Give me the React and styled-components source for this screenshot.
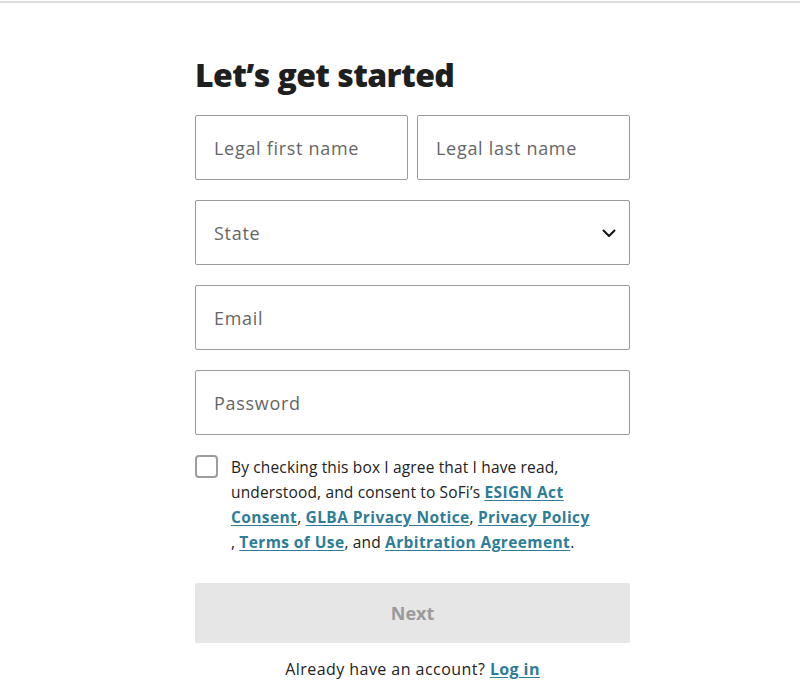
import React from 'react';
import styled, { createGlobalStyle } from 'styled-components';

const GlobalStyle = createGlobalStyle`
  body {
    margin: 0;
    background: #fff;
    font-family: 'Open Sans', 'Lato', sans-serif;
    color: #222;
  }
`;

function Chevron() {
  return (
    <svg width="16" height="16" viewBox="0 0 16 16" fill="none">
      <path d="M2.5 5.5L8 11l5.5-5.5" stroke="#111" strokeWidth="2" strokeLinecap="round" strokeLinejoin="round" />
    </svg>
  );
}

function App() {
  return (
    <Page>
      <GlobalStyle />
      <TopRule />
      <Form>
        <Title>Let’s get started</Title>
        <Row>
          <Field>Legal first name</Field>
          <Field>Legal last name</Field>
        </Row>
        <Field select>
          State
          <Chevron />
        </Field>
        <Field>Email</Field>
        <Field>Password</Field>
        <Consent>
          <Box />
          <ConsentText>
            By checking this box I agree that I have read,
            <br />
            understood, and consent to SoFi’s{' '}
            <TextLink href="#">
              ESIGN Act
              <br />
              Consent
            </TextLink>
            , <TextLink href="#">GLBA Privacy Notice</TextLink>, <TextLink href="#">Privacy Policy</TextLink>
            <br />, <TextLink href="#">Terms of Use</TextLink>, and <TextLink href="#">Arbitration Agreement</TextLink>.
          </ConsentText>
        </Consent>
        <NextButton disabled>Next</NextButton>
        <LoginLine>
          Already have an account? <TextLink href="#">Log in</TextLink>
        </LoginLine>
      </Form>
    </Page>
  );
}

export default App;

const Page = styled.div`
  min-height: 684px;
`;

const TopRule = styled.div`
  height: 2px;
  margin-top: 1px;
  background: #dedede;
`;

const Form = styled.div`
  width: 435px;
  margin-left: 195px;
  padding-top: 52px;
  display: flex;
  flex-direction: column;
  gap: 20px;
`;

const Title = styled.h1`
  margin: 0;
  font-size: 32px;
  line-height: 40px;
  font-weight: 800;
  letter-spacing: -0.6px;
  color: #1f1f1f;
`;

const Row = styled.div`
  display: grid;
  grid-template-columns: 1fr 1fr;
  gap: 9px;
`;

const Field = styled.div`
  height: 65px;
  box-sizing: border-box;
  border: 1px solid #9a9a9a;
  border-radius: 2px;
  padding: 0 12px 0 18px;
  display: flex;
  align-items: center;
  justify-content: ${(p) => (p.select ? 'space-between' : 'flex-start')};
  font-size: 18px;
  letter-spacing: 0.7px;
  color: #666;
`;

const Consent = styled.div`
  display: flex;
  align-items: flex-start;
  gap: 13px;
`;

const Box = styled.div`
  flex: none;
  width: 23px;
  height: 23px;
  box-sizing: border-box;
  border: 2px solid #9d9d9d;
  border-radius: 4px;
`;

const ConsentText = styled.p`
  margin: 0;
  font-size: 15.5px;
  line-height: 25px;
  letter-spacing: 0.15px;
  color: #222;
`;

const TextLink = styled.a`
  color: #2e7d98;
  font-weight: 700;
  letter-spacing: 0.4px;
  text-decoration: underline;
  text-underline-offset: 2px;
`;

const NextButton = styled.button`
  height: 60px;
  margin-top: 8px;
  border: none;
  border-radius: 2px;
  background: #e6e6e6;
  color: #9a9a9a;
  font-family: inherit;
  font-size: 18px;
  font-weight: 700;
`;

const LoginLine = styled.p`
  margin: -5px 0 0;
  text-align: center;
  font-size: 16px;
  letter-spacing: 0.45px;
  color: #222;
`;
